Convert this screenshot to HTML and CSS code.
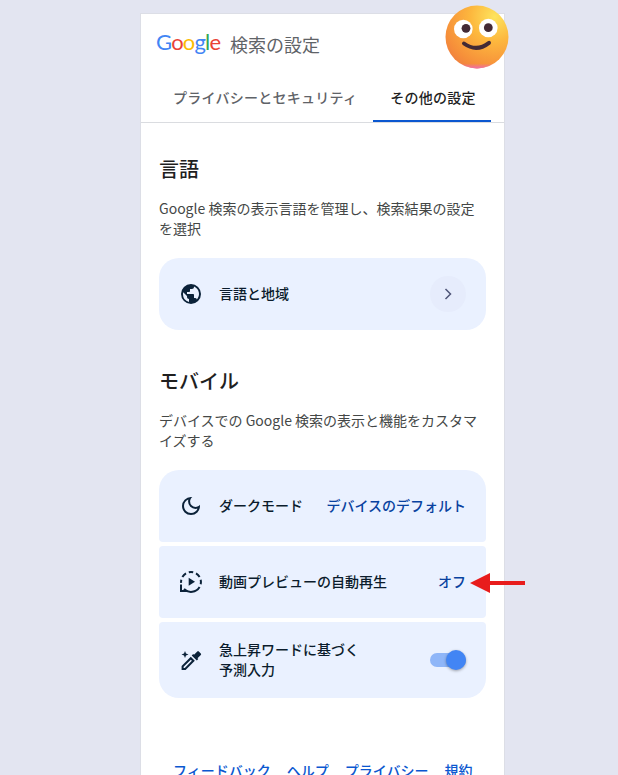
FILE: index.html
```html
<!DOCTYPE html>
<html lang="ja">
<head>
<meta charset="utf-8">
<title>検索の設定</title>
<link rel="stylesheet" href="styles.css">
</head>
<body>
<main class="page">
  <header class="header">
    <span class="logo"><span class="g-blue">G</span><span class="g-red">o</span><span class="g-yellow">o</span><span class="g-blue">g</span><span class="g-green">l</span><span class="g-red">e</span></span>
    <span class="page-title">検索の設定</span>
  </header>
  <nav class="tabs">
    <a class="tab">プライバシーとセキュリティ</a>
    <a class="tab tab-active">その他の設定</a>
  </nav>
  <section class="section section-lang">
    <h2 class="heading">言語</h2>
    <p class="desc">Google 検索の表示言語を管理し、検索結果の設定を選択</p>
    <div class="row row-single">
      <svg class="icon" viewBox="0 0 24 24"><path d="M12 2a10 10 0 1 0 0 20 10 10 0 0 0 0-20zM4 12c0-.6.07-1.2.2-1.8L8 14v1c0 1.1.9 2 2 2v2.9A8 8 0 0 1 4 12zm13.9 5.4A2 2 0 0 0 16 16h-1v-3c0-.55-.45-1-1-1H8v-2h2c.55 0 1-.45 1-1V7h2c1.1 0 2-.9 2-2v-.4a8 8 0 0 1 2.9 12.8z"/></svg>
      <span class="label">言語と地域</span>
      <span class="chevron"><svg viewBox="0 0 24 24"><path d="M9 6l6 6-6 6" fill="none" stroke="#4f5578" stroke-width="1.8"/></svg></span>
    </div>
  </section>
  <section class="section section-mobile">
    <h2 class="heading">モバイル</h2>
    <p class="desc">デバイスでの Google 検索の表示と機能をカスタマイズする</p>
    <div class="group">
      <div class="row row-first">
        <svg class="icon" viewBox="0 0 24 24"><path d="M12 21q-3.750 0-6.375-2.625T3 12q0-3.750 2.625-6.375T12 3q.35 0 .688.025.337.025.662.075-1.025.725-1.637 1.887Q11.100 6.150 11.100 7.500q0 2.250 1.575 3.825Q14.250 12.900 16.500 12.900q1.375 0 2.525-.613 1.150-.612 1.875-1.637.05.325.075.662Q21 11.650 21 12q0 3.750-2.625 6.375T12 21zm0-2q2.200 0 3.950-1.213 1.750-1.212 2.550-3.162-.5.125-1 .2-.5.075-1 .075-3.075 0-5.238-2.162Q9.100 10.575 9.100 7.500q0-.5.075-1t.2-1q-1.950.8-3.163 2.550Q5 9.800 5 12q0 2.900 2.050 4.950Q9.100 19 12 19z"/></svg>
        <span class="label">ダークモード</span>
        <span class="value">デバイスのデフォルト</span>
      </div>
      <div class="row">
        <svg class="icon" viewBox="0 0 24 24"><path d="M9.700 7.800v8l6.300-4z"/><g fill="none" stroke="#0b2239" stroke-width="2"><path d="M9.800 2.300a10 10 0 0 1 4.400 0"/><path d="M17 3.400a10 10 0 0 1 3.600 3.600"/><path d="M21.700 9.800a10 10 0 0 1 0 4.400"/><path d="M20.600 17A10 10 0 0 1 5 19"/><path d="M2.300 9.800a10 10 0 0 0-.2 3"/><path d="M3.400 7A10 10 0 0 1 7 3.400"/></g><path d="M1 14.500V22h7.500v-2H3v-5.500z"/></svg>
        <span class="label">動画プレビューの自動再生</span>
        <span class="value">オフ</span>
      </div>
      <div class="row row-last">
        <svg class="icon" viewBox="0 0 24 24"><path d="M18.800 2.600l3 3a1 1 0 0 1 0 1.400l-3.300 3.300.8.800-1.500 1.500-5.100-5.100 1.500-1.500.8.800 3.300-3.300a1 1 0 0 1 1.500.1z"/><path d="M11.800 8.800l4 4L6.600 22H2.600v-4zm0 2.900l-7.200 7.100v1.200h1.200l7.100-7.200z"/><path d="M6 3l1 2.500L9.500 6.500 7 7.500 6 10 5 7.500 2.500 6.500 5 5.500z"/></svg>
        <span class="label">急上昇ワードに基づく<br>予測入力</span>
        <span class="switch"><span class="knob"></span></span>
      </div>
    </div>
  </section>
  <footer class="footer">
    <a>フィードバック</a><a>ヘルプ</a><a>プライバシー</a><a>規約</a>
  </footer>
  <svg class="emoji" viewBox="0 0 64 64">
    <defs>
      <radialGradient id="face" cx="0.78" cy="0.18" r="0.95">
        <stop offset="0" stop-color="#fde45e"/>
        <stop offset="0.4" stop-color="#fdb83e"/>
        <stop offset="0.85" stop-color="#f68f3a"/>
        <stop offset="1" stop-color="#f0803f"/>
      </radialGradient>
      <linearGradient id="chin" x1="0" y1="0.92" x2="0" y2="1">
        <stop offset="0" stop-color="#ef6cb4" stop-opacity="0"/>
        <stop offset="1" stop-color="#ef6cb4" stop-opacity="0.95"/>
      </linearGradient>
    </defs>
    <circle cx="32" cy="32" r="31.500" fill="url(#face)"/>
    <circle cx="32" cy="32" r="31.500" fill="url(#chin)"/>
    <circle cx="18.300" cy="24" r="9.300" fill="#fff"/>
    <circle cx="43.300" cy="23" r="9.300" fill="#fff"/>
    <circle cx="21" cy="23.300" r="4.400" fill="#432a35"/>
    <circle cx="43.300" cy="22.700" r="4.400" fill="#432a35"/>
    <path d="M19 38.500q12.500 9 25 -.7" fill="none" stroke="#432a35" stroke-width="4" stroke-linecap="round"/>
  </svg>
  <svg class="arrow" viewBox="0 0 56 20"><path d="M0 10L20 0v8h35v4H20v8z" fill="#e81c1c"/></svg>
</main>
</body>
</html>
```
FILE: styles.css
```css
* { box-sizing: border-box; }
html, body { height: 100%; }
body {
  margin: 0;
  background: #e3e5f1;
  font-family: "Noto Sans CJK JP", "Noto Sans", sans-serif;
  color: #1f1f1f;
  overflow: hidden;
}
.page {
  position: relative;
  width: 363px;
  height: 900px;
  margin: 14px 0 0 141px;
  background: #fff;
  box-shadow: 0 0 0 1px #dcdee6;
}
.header {
  display: flex;
  align-items: center;
  height: 60px;
  padding: 0 0 0 15px;
}
.logo {
  width: 74px;
  font-family: Lato, sans-serif;
  font-size: 22px;
  letter-spacing: -0.8px;
  line-height: 1;
  margin-top: -4px;
}
.g-blue { color: #4285f4; }
.g-red { color: #ea4335; }
.g-yellow { color: #fbbc05; }
.g-green { color: #34a853; }
.page-title {
  font-size: 18px;
  line-height: 26px;
  color: #5f6368;
}
.tabs {
  display: flex;
  height: 49px;
  padding-left: 14px;
  border-bottom: 1px solid #dadce0;
}
.tab {
  flex: none;
  padding: 3px 16px 0 18px;
  font-size: 14px;
  font-weight: 500;
  line-height: 40px;
  letter-spacing: 0.25px;
  white-space: nowrap;
  color: #5f6368;
}
.tab-active {
  padding: 3px 15px 0 17px;
  color: #1f1f1f;
  border-bottom: 2px solid #0b57d0;
}
.section { padding: 0 18px; }
.section-lang { padding-top: 30px; }
.section-mobile { padding-top: 35px; }
.heading {
  margin: 0;
  font-size: 20px;
  font-weight: 500;
  line-height: 32px;
}
.desc {
  margin: 13px 0 20px;
  font-size: 14px;
  line-height: 20px;
  color: #444746;
}
.row {
  display: flex;
  align-items: center;
  height: 72px;
  padding: 0 20px;
  background: #eaf1ff;
  border-radius: 4px;
}
.row-single { border-radius: 20px; }
.row-first { border-radius: 20px 20px 4px 4px; }
.row-last { height: 76px; border-radius: 4px 4px 20px 20px; }
.group { display: flex; flex-direction: column; gap: 4px; }
.icon {
  flex: none;
  width: 24px;
  height: 24px;
  margin-right: 16px;
  fill: #0b2239;
}
.label {
  flex: 1;
  padding-bottom: 2px;
  font-size: 14px;
  font-weight: 500;
  line-height: 20px;
  color: #0b1c2c;
}
.value {
  padding-bottom: 2px;
  font-size: 14px;
  font-weight: 500;
  color: #0842a0;
}
.chevron {
  display: flex;
  align-items: center;
  justify-content: center;
  width: 36px;
  height: 36px;
  border-radius: 50%;
  background: #e6ecfc;
}
.chevron svg { width: 20px; height: 20px; }
.switch {
  position: relative;
  width: 36px;
  height: 14px;
  border-radius: 7px;
  background: #8fb6f8;
}
.knob {
  position: absolute;
  top: -3px;
  right: 0;
  width: 20px;
  height: 20px;
  border-radius: 50%;
  background: #4285f4;
  box-shadow: 0 1px 3px rgba(0, 0, 0, 0.35);
}
.footer {
  display: flex;
  gap: 16px;
  padding: 62px 0 0 32px;
  font-size: 14px;
  font-weight: 500;
  color: #0b57d0;
}
.emoji {
  position: absolute;
  left: 304px;
  top: -9px;
  width: 64px;
  height: 64px;
}
.arrow {
  position: absolute;
  left: 329px;
  top: 559px;
  width: 56px;
  height: 20px;
}
```
